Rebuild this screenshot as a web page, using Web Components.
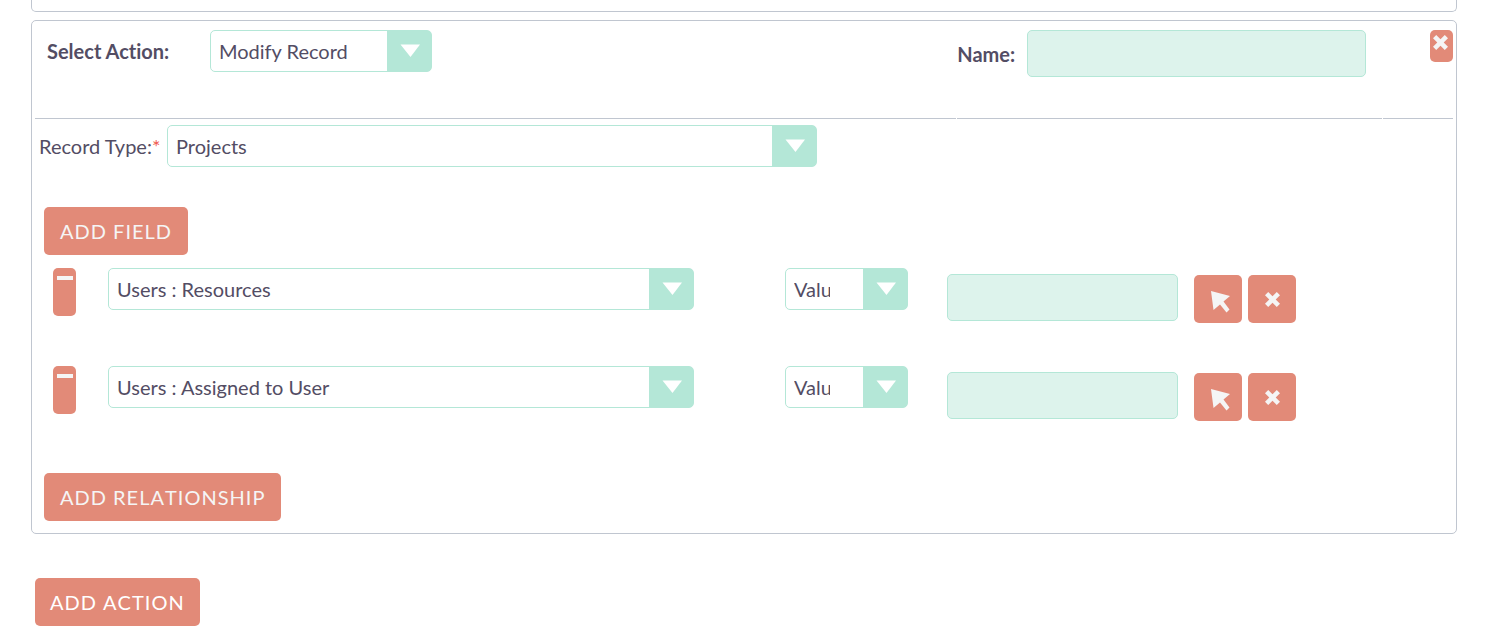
<!DOCTYPE html>
<html lang="en">
<head>
<meta charset="utf-8">
<meta name="viewport" content="width=device-width, initial-scale=1">
<title>Workflow actions</title>
<style>
  body { margin: 0; background: #fff; color: #534d64; font: 20px/24px Lato, sans-serif; font-variant-ligatures: none; }
</style>
</head>
<body>
<workflow-actions></workflow-actions>

<script>
/* Shared palette and reset, included by every component */
const base = `<style>
  * { box-sizing: border-box; }
  :host { --mint: #b4e7d7; --mint-pale: #ddf3ec; --coral: #e28a78; --line: #c0c6d0; --on-coral: #f5f5f5; }
</style>`;

function define(name, markup, setup) {
  const template = document.createElement('template');
  template.innerHTML = base + markup;
  customElements.define(name, class extends HTMLElement {
    static observedAttributes = ['value', 'field'];
    constructor() {
      super();
      this.attachShadow({ mode: 'open' }).append(template.content.cloneNode(true));
    }
    connectedCallback() { if (setup) setup(this, this.shadowRoot); }
    attributeChangedCallback() { if (this.isConnected && setup) setup(this, this.shadowRoot); }
  });
}

/* Drop-down with an optional visible label before it */
define('select-field', `<style>
  :host { display: flex; align-items: center; }
  label { flex: none; }
  label:empty { display: none; }
  :host([strong]) label { font-weight: 700; width: 163px; }
  :host([required]) label { width: 128px; white-space: nowrap; }
  :host([required]) label::after { content: "*"; color: #f05a50; line-height: 1; }
  .box { display: grid; grid-template-columns: 1fr 45px; flex: 0 1 var(--w, 100%); min-width: 0; }
  select { grid-area: 1 / 1 / 2 / 3; appearance: none; width: 100%; height: 42px; margin: 0;
    padding: 0 53px 0 8px; border: 1px solid var(--mint); border-radius: 5px;
    background: linear-gradient(var(--mint), var(--mint)) right / 44px 100% no-repeat #fff;
    color: inherit; font: inherit; }
  :host([narrow]) select { padding-right: 77px; }
  svg { grid-area: 1 / 2; place-self: center; pointer-events: none; z-index: 1; }
</style>
<label for="s"></label>
<span class="box">
  <select id="s"><option></option></select>
  <svg width="20" height="14" viewBox="0 0 20 14" aria-hidden="true"><path d="M0.5 0.5H20L10.5 13Z" fill="#fff"/></svg>
</span>`, (host, root) => {
  root.querySelector('label').textContent = host.getAttribute('label') || '';
  root.querySelector('option').textContent = host.getAttribute('value') || '';
  if (host.hasAttribute('hint')) root.querySelector('select').setAttribute('aria-label', host.getAttribute('hint'));
});

define('text-field', `<style>
  :host { display: flex; align-items: center; gap: 12px; }
  label { font-weight: 700; flex: none; }
  label:empty { display: none; }
  input { flex: 0 1 var(--w, 100%); min-width: 0; height: 47px; margin: 0; padding: 0 8px; border: 1px solid var(--mint);
    border-radius: 5px; background: var(--mint-pale); color: inherit; font: inherit; }
</style>
<label for="i"></label><input id="i" type="text">`, (host, root) => {
  root.querySelector('label').textContent = host.getAttribute('label') || '';
  if (host.hasAttribute('hint')) root.querySelector('input').setAttribute('aria-label', host.getAttribute('hint'));
});

define('action-button', `<style>
  :host { display: block; }
  button { display: block; height: 48px; margin: 0; padding: 0 16px; border: 0; border-radius: 5px; background: var(--coral);
    color: var(--on-coral); font: inherit; font-kerning: none; letter-spacing: 1px; white-space: nowrap; cursor: pointer; }
  :host([bright]) button { color: #fff; padding: 0 15px; }
</style>
<button type="button"><slot></slot></button>`);

const icons = {
  cross: '<svg width="15" height="15" viewBox="1 1 14 14"><path d="M4 1 8 5l4-4 3 3-4 4 4 4-3 3-4-4-4 4-3-3 4-4-4-4Z" fill="#f5f5f5"/></svg>',
  minus: '<svg width="16" height="4" viewBox="0 0 16 4"><path d="M0 0H16V4H0Z" fill="#f5f5f5"/></svg>',
  arrow: '<svg width="20" height="22" viewBox="0 0 20 22"><path d="M0 0 19 5 12.5 10.5 18.5 18.5 15.5 21.5 9 13.5 2.5 19Z" fill="#f5f5f5"/></svg>'
};
define('icon-button', `<style>
  :host { display: block; }
  button { display: flex; align-items: center; justify-content: center; width: 48px; height: 48px; margin: 0; padding: 0;
    border: 0; border-radius: 5px; background: var(--coral); cursor: pointer; }
  svg { display: block; }
  :host([icon="arrow"]) button { padding: 6px 0 0 5px; }
  :host([slim]) button { width: 23px; align-items: flex-start; padding-top: 8px; }
  :host([short]) button { width: 23px; height: 32px; align-items: flex-start; padding: 5px 2px 0 0; }
</style>
<button type="button"></button>`, (host, root) => {
  const button = root.querySelector('button');
  button.innerHTML = icons[host.getAttribute('icon')];
  button.setAttribute('aria-label', host.getAttribute('hint'));
});

/* One field assignment: remove, field, value kind, value, pick and clear */
define('field-row', `<style>
  :host { display: grid; grid-template-columns: 55px 677fr 162fr 247fr 259fr; align-items: start; height: 98px; padding-left: 18px; }
  .field { --w: 586px; }
  .kind { --w: 123px; }
  .value { --w: 231px; padding-top: 6px; }
  .tools { display: flex; gap: 6px; padding-top: 7px; }
</style>
<icon-button slim icon="minus" hint="Remove field"></icon-button>
<select-field class="field" hint="Field"></select-field>
<select-field class="kind" narrow value="Value" hint="Value type"></select-field>
<text-field class="value" hint="Field value"></text-field>
<div class="tools"><icon-button icon="arrow" hint="Select record"></icon-button><icon-button icon="cross" hint="Clear"></icon-button></div>`,
(host, root) => root.querySelector('.field').setAttribute('value', host.getAttribute('field')));

define('action-card', `<style>
  :host { display: block; border: 1px solid var(--line); border-radius: 5px; padding: 0 3px 12px; }
  :host([tail]) { border-top: 0; border-radius: 0 0 5px 5px; padding: 11px 0 0; }
</style><slot></slot>`);

define('workflow-actions', `<style>
  :host { display: block; padding: 0 36px 17px 31px; }
  header { display: grid; grid-template-columns: 922fr 425fr 70px; gap: 1px; }
  header > div { height: 98px; padding-top: 9px; border-bottom: 1px solid var(--line); }
  header > div:first-child { padding-left: 12px; }
  .action { --w: 222px; }
  .name { --w: 339px; }
  .remove { display: flex; justify-content: flex-end; }
  .record { padding: 6px 0 0 4px; --w: 650px; }
  .add-field { padding: 40px 0 13px 9px; }
  .add-rel { padding: 9px 0 0 9px; }
  .add-action { padding: 44px 0 0 4px; }
  .main { margin-top: 8px; }
</style>
<action-card tail></action-card>
<action-card class="main">
  <header>
    <div><select-field class="action" strong label="Select Action:" value="Modify Record"></select-field></div>
    <div><text-field class="name" label="Name:"></text-field></div>
    <div class="remove"><icon-button short icon="cross" hint="Remove action"></icon-button></div>
  </header>
  <select-field class="record" required label="Record Type:" value="Projects"></select-field>
  <action-button class="add-field">ADD FIELD</action-button>
  <field-row field="Users : Resources"></field-row>
  <field-row field="Users : Assigned to User"></field-row>
  <action-button class="add-rel">ADD RELATIONSHIP</action-button>
</action-card>
<action-button class="add-action" bright>ADD ACTION</action-button>`);
</script>
</body>
</html>
